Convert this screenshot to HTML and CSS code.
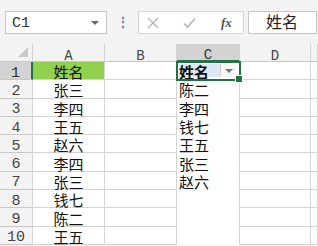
FILE: index.html
```html
<!DOCTYPE html>
<html lang="zh">
<head>
    <meta charset="UTF-8">
    <meta name="viewport" content="width=device-width, initial-scale=1.0">
    <title>姓名</title>
    <link rel="stylesheet" href="styles.css">
</head>
<body>
    <div class="toolbar">
        <div class="name-box">
            <span>C1</span>
            <span class="caret"></span>
        </div>
        <div class="dots">⋮</div>
        <div class="btn-group">
            <svg class="btn-x" width="12" height="12" viewBox="0 0 12 12">
                <path d="M1 1 L11 11 M11 1 L1 11" stroke="#b3b3b3" stroke-width="1.3" fill="none"/>
            </svg>
            <svg class="btn-ok" width="13" height="12" viewBox="0 0 13 12">
                <path d="M1 6.5 L4.5 10 L12 1.5" stroke="#b3b3b3" stroke-width="1.6" fill="none"/>
            </svg>
            <span class="btn-fx">fx</span>
        </div>
        <div class="formula">姓名</div>
    </div>

    <div class="sheet">
        <!-- header row -->
        <div class="corner"><span class="tri"></span></div>
        <div class="col-head">A</div>
        <div class="col-head">B</div>
        <div class="col-head sel">C</div>
        <div class="col-head">D</div>
        <div class="col-head"></div>

        <!-- row 1 -->
        <div class="row-head sel">1</div>
        <div class="cell center green">姓名</div>
        <div class="cell"></div>
        <div class="cell active">
            <span class="title">姓名</span>
            <span class="filter"></span>
        </div>
        <div class="cell"></div>
        <div class="cell"></div>

        <div class="row-head">2</div>
        <div class="cell center">张三</div>
        <div class="cell"></div>
        <div class="cell list">陈二</div>
        <div class="cell"></div>
        <div class="cell"></div>

        <div class="row-head">3</div>
        <div class="cell center">李四</div>
        <div class="cell"></div>
        <div class="cell list">李四</div>
        <div class="cell"></div>
        <div class="cell"></div>

        <div class="row-head">4</div>
        <div class="cell center">王五</div>
        <div class="cell"></div>
        <div class="cell list">钱七</div>
        <div class="cell"></div>
        <div class="cell"></div>

        <div class="row-head">5</div>
        <div class="cell center">赵六</div>
        <div class="cell"></div>
        <div class="cell list">王五</div>
        <div class="cell"></div>
        <div class="cell"></div>

        <div class="row-head">6</div>
        <div class="cell center">李四</div>
        <div class="cell"></div>
        <div class="cell list">张三</div>
        <div class="cell"></div>
        <div class="cell"></div>

        <div class="row-head">7</div>
        <div class="cell center">张三</div>
        <div class="cell"></div>
        <div class="cell list">赵六</div>
        <div class="cell"></div>
        <div class="cell"></div>

        <div class="row-head">8</div>
        <div class="cell center">钱七</div>
        <div class="cell"></div>
        <div class="cell list"></div>
        <div class="cell"></div>
        <div class="cell"></div>

        <div class="row-head">9</div>
        <div class="cell center">陈二</div>
        <div class="cell"></div>
        <div class="cell list"></div>
        <div class="cell"></div>
        <div class="cell"></div>

        <div class="row-head">10</div>
        <div class="cell center">王五</div>
        <div class="cell"></div>
        <div class="cell list"></div>
        <div class="cell"></div>
        <div class="cell"></div>
    </div>
</body>
</html>
```

FILE: styles.css
```css
* {
    box-sizing: border-box;
}

body {
    margin: 0;
    background: #f3f3f3;
    font-family: "Liberation Sans", "Noto Sans CJK SC", sans-serif;
    color: #222;
    overflow: hidden;
}

/* formula bar */
.toolbar {
    height: 44px;
    display: flex;
    align-items: flex-start;
    padding: 11px 0 0 5px;
}

.name-box {
    width: 102px;
    height: 23px;
    background: #fff;
    border: 1px solid #c6c6c6;
    display: flex;
    align-items: center;
    justify-content: space-between;
    padding: 1px 7px 0 6px;
    font-family: "Liberation Mono", monospace;
    font-size: 15px;
    color: #333;
}

.caret {
    width: 0;
    height: 0;
    border-left: 4px solid transparent;
    border-right: 4px solid transparent;
    border-top: 4px solid #666;
}

.dots {
    width: 31px;
    text-align: center;
    color: #888;
    font-size: 14px;
    line-height: 23px;
    font-weight: bold;
}

.btn-group {
    width: 106px;
    height: 23px;
    background: #fff;
    border: 1px solid #d6d6d6;
    display: flex;
    align-items: center;
    padding: 0 0 0 8px;
}

.btn-x {
    margin-right: 24px;
}

.btn-ok {
    margin-right: 25px;
}

.btn-fx {
    font-family: "Liberation Serif", serif;
    font-style: italic;
    font-weight: bold;
    font-size: 13px;
    color: #555;
}

.formula {
    margin-left: 4px;
    width: 69px;
    height: 23px;
    background: #fff;
    border: 1px solid #c6c6c6;
    padding-left: 17px;
    font-size: 16px;
    line-height: 21px;
    color: #222;
}

/* sheet grid */
.sheet {
    display: grid;
    grid-template-columns: 33px 72px 72px 63px 71px 1fr;
    grid-template-rows: 18px repeat(10, 18.3px);
    background: #fff;
}

.corner,
.col-head,
.row-head {
    background: #f3f3f3;
    border-right: 1px solid #d4d4d4;
    border-bottom: 1px solid #c8c8c8;
    color: #444;
    font-family: "Liberation Mono", monospace;
    font-size: 14px;
    line-height: 16px;
    padding-top: 6px;
    display: flex;
    align-items: center;
    justify-content: center;
}

.corner {
    position: relative;
    padding-top: 0;
}

.tri {
    position: absolute;
    right: 4px;
    bottom: 4px;
    width: 0;
    height: 0;
    border-left: 10px solid transparent;
    border-bottom: 10px solid #c9c9c9;
}

.row-head {
    font-size: 15px;
}

.col-head.sel,
.row-head.sel {
    background: #d3d3d3;
    color: #333;
}

.col-head.sel {
    border-bottom: 2px solid #217346;
}

.row-head.sel {
    border-right: 2px solid #217346;
}

.cell {
    border-right: 1px solid #d4d4d4;
    border-bottom: 1px solid #d4d4d4;
    font-size: 15px;
    line-height: 16px;
    padding-top: 5px;
    display: flex;
    align-items: center;
    color: #111;
    white-space: nowrap;
}

.cell.center {
    justify-content: center;
}

.cell.green {
    background: #92d050;
}

.cell.list {
    border-bottom-color: #fff;
    padding-left: 2px;
}

.cell.active {
    position: relative;
    padding: 2px 3px 2px 2px;
}

.cell.active::after {
    content: "";
    position: absolute;
    left: -1px;
    top: -1px;
    right: -2px;
    bottom: -2px;
    border: 2px solid #217346;
}

.cell.active::before {
    content: "";
    position: absolute;
    right: -4px;
    bottom: -4px;
    width: 6px;
    height: 6px;
    background: #217346;
    border: 1px solid #fff;
    z-index: 1;
}

.title {
    flex: 1;
    height: 100%;
    background: #dde8f4;
    font-weight: bold;
    display: flex;
    align-items: center;
    padding-top: 4px;
}

.filter {
    width: 16px;
    height: 100%;
    background: #f6f6f6;
    border-left: 1px solid #cfcfcf;
    display: flex;
    align-items: center;
    justify-content: center;
}

.filter::after {
    content: "";
    border-left: 4px solid transparent;
    border-right: 4px solid transparent;
    border-top: 4px solid #777;
}
```
